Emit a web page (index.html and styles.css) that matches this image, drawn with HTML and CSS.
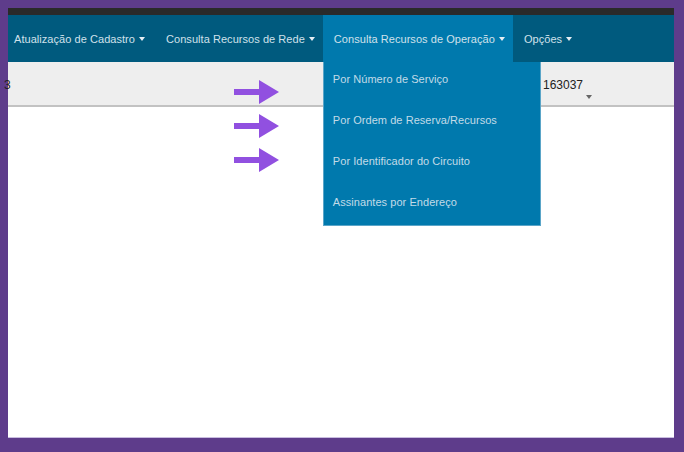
FILE: index.html
```
<!DOCTYPE html>
<html lang="pt">
<head>
<meta charset="utf-8">
<link rel="stylesheet" href="styles.css">
</head>
<body>
<div class="frame">
  <div class="topband"></div>
  <nav class="nav">
    <div class="nav-item first">Atualização de Cadastro <span class="caret"></span></div>
    <div class="nav-item">Consulta Recursos de Rede <span class="caret"></span></div>
    <div class="nav-item active">Consulta Recursos de Operação <span class="caret"></span>
      <ul class="dropdown">
        <li>Por Número de Serviço</li>
        <li>Por Ordem de Reserva/Recursos</li>
        <li>Por Identificador do Circuito</li>
        <li>Assinantes por Endereço</li>
      </ul>
    </div>
    <div class="nav-item">Opções <span class="caret"></span></div>
  </nav>
  <div class="subbar">
    <span class="sub-left">3</span>
    <span class="sub-right">163037<span class="subcaret"></span></span>
  </div>
  <div class="content"></div>
  <div class="arrows">
    <svg class="arrow" width="46" height="26" viewBox="0 0 46 26"><path d="M0 10H25V1L45 13L25 25V16H0Z" fill="#9150e0"/></svg>
    <svg class="arrow" width="46" height="26" viewBox="0 0 46 26"><path d="M0 10H25V1L45 13L25 25V16H0Z" fill="#9150e0"/></svg>
    <svg class="arrow" width="46" height="26" viewBox="0 0 46 26"><path d="M0 10H25V1L45 13L25 25V16H0Z" fill="#9150e0"/></svg>
  </div>
</div>
</body>
</html>
```
FILE: styles.css
```
* { box-sizing: border-box; }
html, body { margin: 0; padding: 0; }
body {
  background: #5e3c8b;
  width: 684px;
  height: 452px;
  padding: 8px 10px 0 8px;
  font-family: "Liberation Sans", Arial, sans-serif;
  overflow: hidden;
}
.frame {
  position: relative;
  width: 666px;
  height: 430px;
  background: #fff;
  display: flex;
  flex-direction: column;
  border-bottom: 1px solid #c9bde0;
}
.topband { height: 7px; background: #2a2a2a; flex: none; }
.nav {
  height: 47px;
  flex: none;
  background: #005a7e;
  display: flex;
  align-items: stretch;
}
.nav-item {
  position: relative;
  display: flex;
  align-items: center;
  padding: 0 8px 0 11px;
  color: #d0e1eb;
  font-size: 11px;
  letter-spacing: 0.05px;
  white-space: nowrap;
}
.nav-item.first { padding-left: 6px; padding-right: 10px; }
.nav-item.active { background: #0079ad; }
.caret {
  display: inline-block;
  width: 0; height: 0;
  margin-left: 4px;
  border-left: 3.5px solid transparent;
  border-right: 3.5px solid transparent;
  border-top: 4px solid #e6eef3;
}
.dropdown {
  position: absolute;
  left: 0;
  top: 47px;
  width: 218px;
  height: 164px;
  margin: 0;
  padding: 11px 0 0 0;
  list-style: none;
  background: #0079ad;
  border: 1px solid #5aa5c8;
  border-top: none;
  z-index: 5;
}
.dropdown li {
  height: 41px;
  padding-left: 9px;
  color: #c3dbe8;
  font-size: 11px;
}
.subbar {
  height: 45px;
  flex: none;
  background: #eeeeee;
  border-bottom: 2px solid #c2c2c2;
  position: relative;
  color: #222;
  font-size: 12px;
}
.sub-left { position: absolute; left: -4px; top: 16px; }
.sub-right { position: absolute; left: 535px; top: 16px; }
.subcaret {
  position: absolute;
  left: 43px;
  top: 17px;
  width: 0; height: 0;
  border-left: 3.5px solid transparent;
  border-right: 3.5px solid transparent;
  border-top: 4px solid #666;
}
.content { flex: 1; background: #fff; }
.arrows {
  position: absolute;
  left: 226px;
  top: 71px;
  display: flex;
  flex-direction: column;
  gap: 8px;
}
.arrow { display: block; }
```
